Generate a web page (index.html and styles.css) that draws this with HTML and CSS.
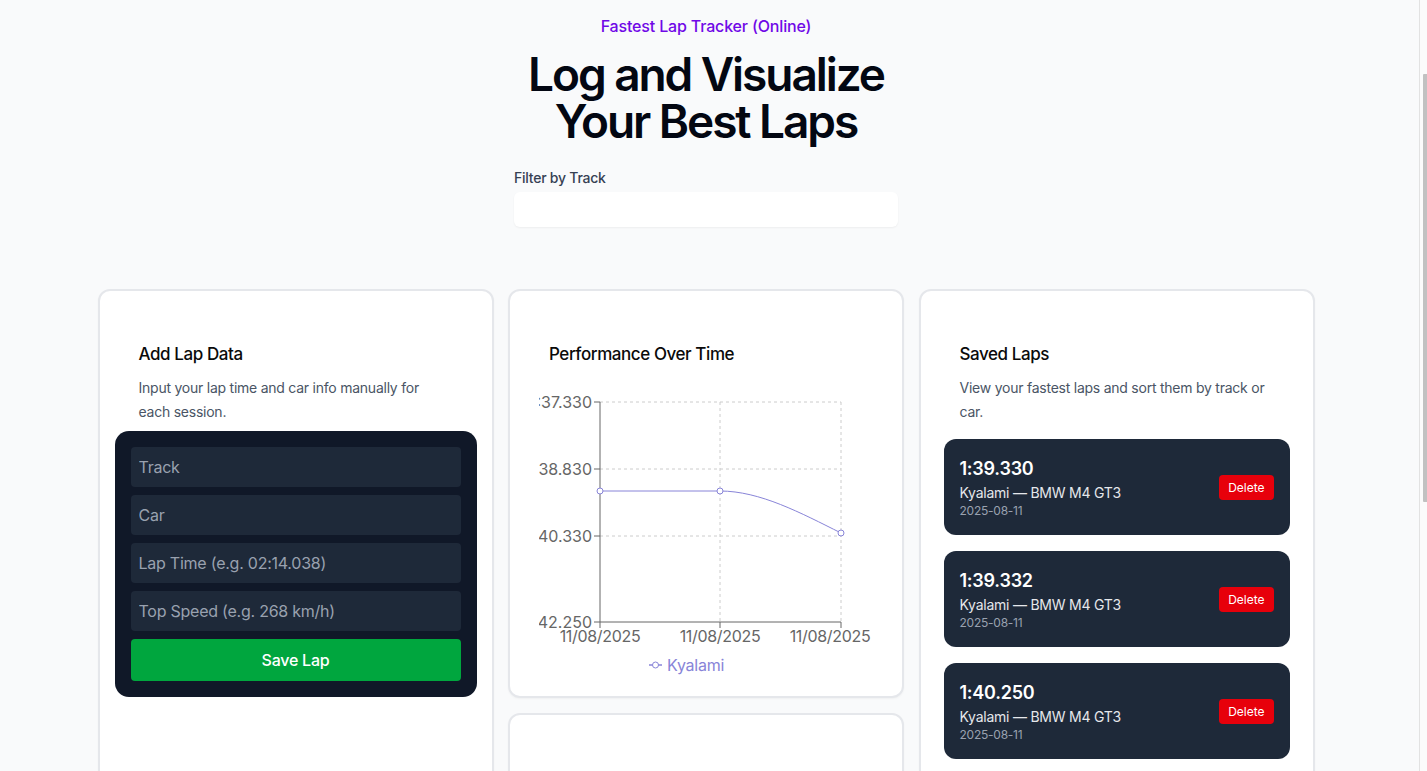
FILE: index.html
```html
<!DOCTYPE html>
<html lang="en">
<head>
<meta charset="utf-8">
<title>Fastest Lap Tracker</title>
<link rel="stylesheet" href="styles.css">
</head>
<body>
<div class="page">
<header class="hero">
  <p class="eyebrow">Fastest Lap Tracker (Online)</p>
  <h1 class="headline">Log and Visualize<br>Your Best Laps</h1>
  <div class="filter">
    <label class="filter-label" for="filter">Filter by Track</label>
    <input class="filter-input" id="filter" type="text">
  </div>
</header>

<main class="grid">
  <section class="card">
    <div class="card-header">
      <h2 class="card-title">Add Lap Data</h2>
      <p class="card-desc">Input your lap time and car info manually for each session.</p>
    </div>
    <form class="lap-form">
      <input class="field" type="text" placeholder="Track">
      <input class="field" type="text" placeholder="Car">
      <input class="field" type="text" placeholder="Lap Time (e.g. 02:14.038)">
      <input class="field" type="text" placeholder="Top Speed (e.g. 268 km/h)">
      <button class="save-btn" type="button">Save Lap</button>
    </form>
  </section>

  <div class="column">
    <section class="card chart-card">
      <div class="card-header card-header-tight">
        <h2 class="card-title">Performance Over Time</h2>
      </div>
      <svg class="chart" width="348" height="307" viewBox="540 375 348 307">
        <g class="grid-lines">
          <line x1="601" y1="403" x2="842" y2="403"/>
          <line x1="601" y1="470" x2="842" y2="470"/>
          <line x1="601" y1="537" x2="842" y2="537"/>
          <line x1="721" y1="403" x2="721" y2="623"/>
          <line x1="842" y1="403" x2="842" y2="623"/>
        </g>
        <g class="axis">
          <line x1="601" y1="403" x2="601" y2="623"/>
          <line x1="601" y1="623" x2="842" y2="623"/>
          <line x1="595" y1="403" x2="601" y2="403"/>
          <line x1="595" y1="470" x2="601" y2="470"/>
          <line x1="595" y1="537" x2="601" y2="537"/>
          <line x1="595" y1="623" x2="601" y2="623"/>
          <line x1="601" y1="623" x2="601" y2="629"/>
          <line x1="721" y1="623" x2="721" y2="629"/>
          <line x1="842" y1="623" x2="842" y2="629"/>
        </g>
        <g class="tick-y">
          <text x="593" y="409">1:37.330</text>
          <text x="593" y="476">1:38.830</text>
          <text x="593" y="543">1:40.330</text>
          <text x="593" y="629">1:42.250</text>
        </g>
        <g class="tick-x">
          <text x="601" y="643">11/08/2025</text>
          <text x="721" y="643">11/08/2025</text>
          <text x="831" y="643">11/08/2025</text>
        </g>
        <path class="series" d="M601,492 L721,492 C761,492 802,514 842,534"/>
        <g class="dots">
          <circle cx="601" cy="492" r="3"/>
          <circle cx="721" cy="492" r="3"/>
          <circle cx="842" cy="534" r="3"/>
        </g>
        <g class="legend">
          <line x1="650" y1="666" x2="663" y2="666"/>
          <circle cx="656.5" cy="666" r="3"/>
          <text x="668" y="672">Kyalami</text>
        </g>
      </svg>
    </section>
    <section class="card extra-card"></section>
  </div>

  <section class="card">
    <div class="card-header">
      <h2 class="card-title">Saved Laps</h2>
      <p class="card-desc">View your fastest laps and sort them by track or car.</p>
    </div>
    <ul class="lap-list">
      <li class="lap">
        <div class="lap-info">
          <div class="lap-time">1:39.330</div>
          <div class="lap-meta">Kyalami — BMW M4 GT3</div>
          <div class="lap-date">2025-08-11</div>
        </div>
        <button class="delete-btn" type="button">Delete</button>
      </li>
      <li class="lap">
        <div class="lap-info">
          <div class="lap-time">1:39.332</div>
          <div class="lap-meta">Kyalami — BMW M4 GT3</div>
          <div class="lap-date">2025-08-11</div>
        </div>
        <button class="delete-btn" type="button">Delete</button>
      </li>
      <li class="lap">
        <div class="lap-info">
          <div class="lap-time">1:40.250</div>
          <div class="lap-meta">Kyalami — BMW M4 GT3</div>
          <div class="lap-date">2025-08-11</div>
        </div>
        <button class="delete-btn" type="button">Delete</button>
      </li>
    </ul>
  </section>
</main>
</div>
<div class="scrollbar" aria-hidden="true"><div class="scrollbar-thumb"></div></div>
</body>
</html>
```

FILE: styles.css
```css
* { box-sizing: border-box; }

html, body {
  margin: 0;
  padding: 0;
}

body {
  background: #f9fafb;
  font-family: Inter, "Noto Sans", "Liberation Sans", sans-serif;
  letter-spacing: -0.015em;
  color: #0a0a0a;
}

.page {
  padding-right: 15px;
}

.scrollbar {
  position: fixed;
  top: 0;
  right: 0;
  width: 8px;
  height: 100vh;
  background: #fbfbfb;
  border-left: 1px solid #e2e2e2;
}

.scrollbar-thumb {
  position: absolute;
  top: 74px;
  right: 0;
  width: 4px;
  height: 428px;
  background: #c1c1c1;
  border-radius: 1px 0 0 1px;
}

.hero {
  display: flex;
  flex-direction: column;
  align-items: center;
  padding-top: 14px;
}

.eyebrow {
  margin: 0;
  font-size: 16px;
  line-height: 24px;
  font-weight: 500;
  color: #7008e7;
  letter-spacing: -0.01em;
}

.headline {
  margin: 13px 0 0;
  font-size: 46px;
  line-height: 47px;
  font-weight: 600;
  letter-spacing: -0.045em;
  text-align: center;
  color: #030712;
}

.filter {
  width: 384px;
  margin-top: 23px;
  display: flex;
  flex-direction: column;
  gap: 4px;
}

.filter-label {
  font-size: 14px;
  line-height: 20px;
  font-weight: 500;
  color: #364153;
}

.filter-input {
  height: 35px;
  border: none;
  border-radius: 6px;
  background: #fff;
  box-shadow: 0 1px 2px rgba(0, 0, 0, 0.05);
  font: inherit;
  outline: none;
}

.grid {
  width: 1217px;
  margin: 62px auto 0;
  padding-bottom: 160px;
  display: grid;
  grid-template-columns: 396px 396px 396px;
  column-gap: 14.5px;
  align-items: stretch;
}

.column {
  display: flex;
  flex-direction: column;
  gap: 15px;
}

.card {
  background: #fff;
  border: 2px solid #e5e7eb;
  border-radius: 12px;
  padding: 15px;
  box-shadow: 0 1px 2px rgba(0, 0, 0, 0.04);
}

.card-header {
  padding: 34px 24px 7px;
}

.card-header-tight {
  padding-bottom: 6px;
}

.card-title {
  margin: 0;
  font-size: 17px;
  line-height: 28px;
  font-weight: 500;
  letter-spacing: -0.025em;
  color: #0a0a0a;
}

.card-desc {
  margin: 8px 0 0;
  font-size: 14px;
  line-height: 24px;
  color: #4a5565;
}

/* form */
.lap-form {
  margin: 0;
  padding: 16px;
  background: #101828;
  border-radius: 14px;
  display: flex;
  flex-direction: column;
  gap: 8px;
}

.field {
  height: 40px;
  padding: 0 8px;
  border: none;
  border-radius: 4px;
  background: #1e2939;
  color: #fff;
  font-family: inherit;
  font-size: 16px;
  letter-spacing: -0.015em;
  outline: none;
}

.field::placeholder {
  color: #99a1af;
}

.save-btn {
  height: 42px;
  border: none;
  border-radius: 4px;
  background: #00a63e;
  color: #fff;
  font-family: inherit;
  font-size: 16px;
  font-weight: 500;
  letter-spacing: -0.015em;
}

/* chart */
.chart-card {
  height: 409px;
}

.chart {
  display: block;
  margin-left: 14px;
  overflow: hidden;
  font-family: Inter, "Noto Sans", sans-serif;
  letter-spacing: 0;
}

.grid-lines line {
  stroke: #ccc;
  stroke-dasharray: 3 3;
  stroke-width: 1;
}

.axis line {
  stroke: #666;
  stroke-width: 1;
}

.tick-y text,
.tick-x text {
  fill: #666;
  font-size: 16px;
}

.tick-y text { text-anchor: end; }
.tick-x text { text-anchor: middle; letter-spacing: -0.02em; }

.series {
  fill: none;
  stroke: #8884d8;
  stroke-width: 1;
}

.dots circle,
.legend circle {
  fill: #fff;
  stroke: #8884d8;
  stroke-width: 1;
}

.legend line {
  stroke: #8884d8;
  stroke-width: 1.5;
}

.legend text {
  fill: #8884d8;
  font-size: 16px;
  letter-spacing: -0.015em;
}

.extra-card {
  flex: 1;
  min-height: 420px;
}

/* laps */
.lap-list {
  list-style: none;
  margin: 8px 8px 0;
  padding: 0;
  display: flex;
  flex-direction: column;
  gap: 16px;
}

.lap {
  display: flex;
  align-items: center;
  justify-content: space-between;
  padding: 16px;
  background: #1e2939;
  border-radius: 12px;
}

.lap-time {
  font-size: 18px;
  line-height: 28px;
  font-weight: 600;
  color: #fff;
}

.lap-meta {
  font-size: 14px;
  line-height: 20px;
  color: #e5e7eb;
}

.lap-date {
  font-size: 12px;
  line-height: 16px;
  color: #99a1af;
}

.delete-btn {
  border: none;
  border-radius: 4px;
  background: #e7000b;
  color: #fff;
  font-family: inherit;
  font-size: 12px;
  line-height: 17px;
  padding: 4px 9px;
  letter-spacing: 0;
}
```
